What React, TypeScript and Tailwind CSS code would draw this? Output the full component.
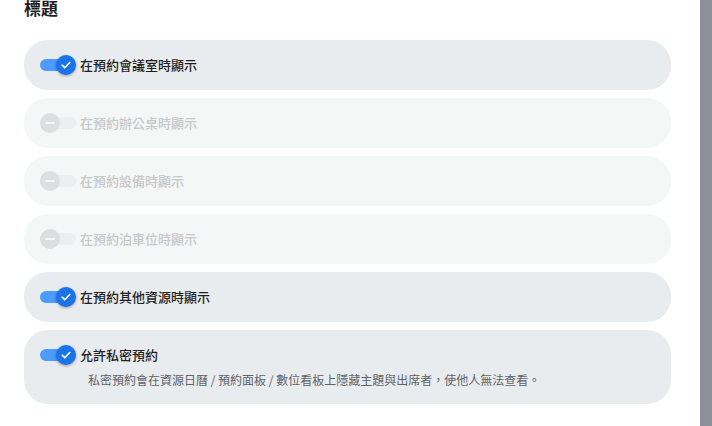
import React, { useState } from 'react';

type Option = {
  id: string;
  label: string;
  enabled: boolean;
  checked: boolean;
  hint?: string;
};

const OPTIONS: Option[] = [
  { id: 'room', label: '在預約會議室時顯示', enabled: true, checked: true },
  { id: 'desk', label: '在預約辦公桌時顯示', enabled: false, checked: false },
  { id: 'equip', label: '在預約設備時顯示', enabled: false, checked: false },
  { id: 'parking', label: '在預約泊車位時顯示', enabled: false, checked: false },
  { id: 'other', label: '在預約其他資源時顯示', enabled: true, checked: true },
  {
    id: 'private',
    label: '允許私密預約',
    enabled: true,
    checked: true,
    hint: '私密預約會在資源日曆 / 預約面板 / 數位看板上隱藏主題與出席者，使他人無法查看。',
  },
];

const Toggle: React.FC<{ on: boolean; disabled?: boolean; onClick?: () => void }> = ({ on, disabled, onClick }) => {
  if (disabled) {
    return (
      <div className="relative w-[36px] h-[20px] shrink-0 flex items-center">
        <div className="w-[36px] h-[12px] rounded-full bg-[#eceeef]" />
        <div className="absolute left-0 top-0 w-[20px] h-[20px] rounded-full bg-[#dcdedf] flex items-center justify-center">
          <div className="w-[10px] h-[2px] rounded bg-[#f4f5f5]" />
        </div>
      </div>
    );
  }
  return (
    <button onClick={onClick} className="relative w-[36px] h-[20px] shrink-0 flex items-center">
      <div className={`w-[32px] h-[12px] rounded-full ${on ? 'bg-[#4d9bff]' : 'bg-[#c9ccd1]'}`} />
      <div
        className={`absolute top-0 w-[20px] h-[20px] rounded-full flex items-center justify-center shadow-[0_1px_3px_rgba(0,0,0,0.35)] ${
          on ? 'left-[16px] bg-[#1a73e8]' : 'left-0 bg-white'
        }`}
      >
        {on && (
          <svg width="12" height="12" viewBox="0 0 24 24" fill="none" stroke="white" strokeWidth="3.4" strokeLinecap="round" strokeLinejoin="round">
            <path d="M4.5 12.5l5 5L19.5 7" />
          </svg>
        )}
      </div>
    </button>
  );
};

const App: React.FC = () => {
  const [state, setState] = useState<Record<string, boolean>>(
    Object.fromEntries(OPTIONS.map(o => [o.id, o.checked]))
  );

  return (
    <div
      className="flex w-[712px] h-[426px] overflow-hidden bg-white"
      style={{ fontFamily: '"Noto Sans CJK TC", "Noto Sans", sans-serif' }}
    >
      <div className="flex-1 pl-6 pr-[29px]">
        <h2 className="text-[17px] font-bold text-[#1f1f1f] leading-none -mt-[1px] mb-[24px]">標題</h2>
        <div className="flex flex-col gap-2">
          {OPTIONS.map(o => (
            <div
              key={o.id}
              className={`rounded-[24px] pl-4 pr-4 ${o.hint ? 'pt-[15px] pb-[15px]' : 'py-[15px]'} ${
                o.enabled ? 'bg-[#e9ecef]' : 'bg-[#f5f6f6]'
              }`}
            >
              <div className="flex items-center gap-[4px] h-[20px]">
                <Toggle
                  on={state[o.id]}
                  disabled={!o.enabled}
                  onClick={() => setState(p => ({ ...p, [o.id]: !p[o.id] }))}
                />
                <span className={`text-[13px] font-medium ${o.enabled ? 'text-[#1f1f1f]' : 'text-[#c6c8ca]'}`}>
                  {o.label}
                </span>
              </div>
              {o.hint && <p className="mt-[6px] pl-[48px] text-[12px] text-[#5f6368]">{o.hint}</p>}
            </div>
          ))}
        </div>
      </div>
      <div className="w-[12px] h-full bg-[#8c9099]" />
    </div>
  );
};

export default App;
